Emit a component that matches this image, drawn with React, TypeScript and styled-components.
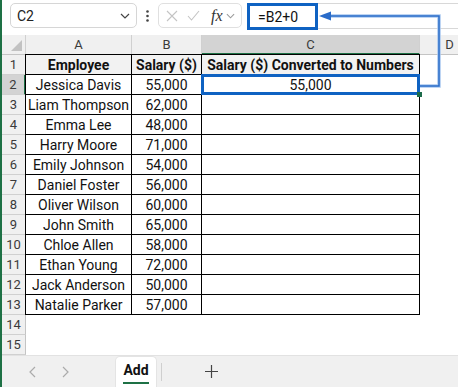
import React from 'react'
import styled, { createGlobalStyle, css } from 'styled-components'

const GlobalStyle = createGlobalStyle`
  html, body { margin: 0; padding: 0; background: #fff; }
  body { font-family: Roboto, 'Liberation Sans', Arial, sans-serif; }
`

const Window = styled.div`
  position: relative;
  width: 456px;
  height: 387px;
  overflow: hidden;
  border-left: 2px solid #1e7145;
  background: #fff;
`

const FormulaBar = styled.div`
  height: 35px;
  display: flex;
  align-items: flex-start;
  padding-top: 3px;
  box-sizing: border-box;
`

const NameBox = styled.div`
  margin-left: 8px;
  width: 127px;
  height: 25px;
  box-sizing: border-box;
  border: 1px solid #d6d6d6;
  border-radius: 5px;
  display: flex;
  align-items: center;
  justify-content: space-between;
  padding: 0 6px 0 6px;
  font-size: 14px;
  color: #222;
`

const Dots = styled.div`
  width: 21px;
  height: 25px;
  display: flex;
  align-items: center;
  justify-content: center;
  svg { display: block; }
`

const FxBox = styled.div`
  width: 84px;
  height: 25px;
  box-sizing: border-box;
  border: 1px solid #e0e0e0;
  border-radius: 5px;
  display: flex;
  align-items: center;
  padding: 0 4px 0 7px;
  gap: 9px;
  svg { display: block; }
`

const Fx = styled.span`
  font-family: 'Liberation Serif', 'DejaVu Serif', serif;
  font-style: italic;
  font-size: 16px;
  color: #333;
  margin-left: 2px;
  margin-right: -6px;
`

const FormulaInput = styled.div`
  flex: 1;
  margin-left: 5px;
  height: 26px;
  box-sizing: border-box;
  border-top: 1px solid #d8d8d8;
  border-bottom: 1px solid #d8d8d8;
  display: flex;
  align-items: flex-start;
`

const FormulaHighlight = styled.div`
  margin-top: -1px;
  width: 71px;
  height: 27px;
  box-sizing: border-box;
  border: 3px solid #0f62c2;
  display: flex;
  align-items: center;
  padding-left: 8px;
  font-size: 14px;
  color: #111;
`

const Sheet = styled.div`
  display: grid;
  grid-template-columns: 24px 106px 70px 218px 60px;
  grid-auto-rows: 20px;
`

const CornerCell = styled.div`
  position: relative;
  background: #f0f0f0;
  border-right: 1px solid #d0d0d0;
  border-bottom: 1px solid #c4c4c4;
  box-sizing: border-box;
  svg { position: absolute; right: 3px; bottom: 3px; }
`

const ColHeader = styled.div<{ $active?: boolean }>`
  background: ${p => (p.$active ? '#d3d3d3' : '#f0f0f0')};
  border-right: 1px solid #d0d0d0;
  border-bottom: ${p => (p.$active ? '2px solid #1e7145' : '1px solid #c4c4c4')};
  box-sizing: border-box;
  display: flex;
  align-items: center;
  justify-content: center;
  font-size: 13px;
  color: #3a3a3a;
`

const RowHeader = styled.div<{ $active?: boolean }>`
  background: ${p => (p.$active ? '#d3d3d3' : '#f0f0f0')};
  border-right: ${p => (p.$active ? '2px solid #1e7145' : '1px solid #c4c4c4')};
  border-bottom: 1px solid #d0d0d0;
  box-sizing: border-box;
  display: flex;
  align-items: center;
  justify-content: center;
  font-size: 13px;
  color: #3a3a3a;
`

const Cell = styled.div<{ $table?: boolean; $head?: boolean; $first?: boolean; $selected?: boolean }>`
  position: relative;
  box-sizing: border-box;
  display: flex;
  align-items: center;
  justify-content: center;
  font-size: 14px;
  color: #111;
  white-space: nowrap;
  ${p =>
    p.$table &&
    css`
      border-right: 1px solid #000;
      border-bottom: 1px solid #000;
    `}
  ${p =>
    p.$head &&
    css`
      background: #f2f2f2;
      font-weight: 700;
      border-top: 1px solid #000;
      margin-top: -1px;
      height: 21px;
    `}
  ${p =>
    p.$first &&
    css`
      border-left: 1px solid #000;
      margin-left: -1px;
    `}
  ${p =>
    p.$selected &&
    css`
      &::after {
        content: '';
        position: absolute;
        top: -1px;
        left: -1px;
        right: -1px;
        bottom: -1px;
        border: 3px solid #0f62c2;
      }
      &::before {
        content: '';
        position: absolute;
        right: -3px;
        bottom: -3px;
        width: 5px;
        height: 5px;
        background: #1b6b4a;
        z-index: 2;
      }
    `}
`

const Annotation = styled.svg`
  position: absolute;
  top: 0;
  left: -2px;
  pointer-events: none;
`

const TabBar = styled.div`
  height: 32px;
  box-sizing: border-box;
  background: #f0f0f0;
  border-top: 1px solid #e2e2e2;
  display: flex;
  align-items: flex-start;
`

const NavArrow = styled.div<{ $offset: number }>`
  margin-left: ${p => p.$offset}px;
  height: 31px;
  display: flex;
  align-items: center;
  svg { display: block; }
`

const Tab = styled.div`
  margin-left: 46px;
  width: 42px;
  height: 31px;
  box-sizing: border-box;
  background: #fff;
  border: 1px solid #e4e4e4;
  border-bottom: none;
  border-radius: 5px 5px 0 0;
  display: flex;
  flex-direction: column;
  align-items: center;
  padding-top: 5px;
  font-size: 14px;
  font-weight: 700;
  color: #111;
`

const TabUnderline = styled.div`
  margin-top: 4px;
  width: 26px;
  height: 2px;
  background: #1e7145;
`

const Separator = styled.div`
  margin: 7px 0 0 4px;
  width: 1px;
  height: 18px;
  background: #cfcfcf;
`

const AddSheet = styled.div`
  margin-left: 43px;
  height: 31px;
  display: flex;
  align-items: center;
  svg { display: block; }
`

const rows: [string, string][] = [
  ['Jessica Davis', '55,000'],
  ['Liam Thompson', '62,000'],
  ['Emma Lee', '48,000'],
  ['Harry Moore', '71,000'],
  ['Emily Johnson', '54,000'],
  ['Daniel Foster', '56,000'],
  ['Oliver Wilson', '60,000'],
  ['John Smith', '65,000'],
  ['Chloe Allen', '58,000'],
  ['Ethan Young', '72,000'],
  ['Jack Anderson', '50,000'],
  ['Natalie Parker', '57,000'],
]

const Chevron = ({ color = '#555', w = 10 }: { color?: string; w?: number }) => (
  <svg width={w} height={6} viewBox="0 0 10 6">
    <path d="M1 1 L5 5 L9 1" fill="none" stroke={color} strokeWidth="1.2" />
  </svg>
)

export default function App() {
  return (
    <>
      <GlobalStyle />
      <Window>
        <FormulaBar>
          <NameBox>
            <span>C2</span>
            <Chevron color="#444" w={10} />
          </NameBox>
          <Dots>
            <svg width="3" height="12" viewBox="0 0 3 12">
              <circle cx="1.5" cy="1.5" r="1.3" fill="#444" />
              <circle cx="1.5" cy="6" r="1.3" fill="#444" />
              <circle cx="1.5" cy="10.5" r="1.3" fill="#444" />
            </svg>
          </Dots>
          <FxBox>
            <svg width="12" height="12" viewBox="0 0 12 12">
              <path d="M1 1 L11 11 M11 1 L1 11" stroke="#c4c4c4" strokeWidth="1.1" />
            </svg>
            <svg width="13" height="11" viewBox="0 0 13 11">
              <path d="M1 6 L4.5 10 L12 1" fill="none" stroke="#c4c4c4" strokeWidth="1.1" />
            </svg>
            <Fx>fx</Fx>
            <Chevron color="#9a9a9a" w={9} />
          </FxBox>
          <FormulaInput>
            <FormulaHighlight>=B2+0</FormulaHighlight>
          </FormulaInput>
        </FormulaBar>

        <Sheet>
          <CornerCell>
            <svg width="11" height="11" viewBox="0 0 11 11">
              <polygon points="11,0 11,11 0,11" fill="#c2c2c2" />
            </svg>
          </CornerCell>
          <ColHeader>A</ColHeader>
          <ColHeader>B</ColHeader>
          <ColHeader $active>C</ColHeader>
          <ColHeader>D</ColHeader>

          <RowHeader>1</RowHeader>
          <Cell $table $head $first>Employee</Cell>
          <Cell $table $head>Salary ($)</Cell>
          <Cell $table $head>Salary ($) Converted to Numbers</Cell>
          <Cell />

          {rows.map(([name, salary], i) => (
            <React.Fragment key={name}>
              <RowHeader $active={i === 0}>{i + 2}</RowHeader>
              <Cell $table $first>{name}</Cell>
              <Cell $table>{salary}</Cell>
              <Cell $table $selected={i === 0}>{i === 0 ? '55,000' : ''}</Cell>
              <Cell />
            </React.Fragment>
          ))}

          {[14, 15].map(n => (
            <React.Fragment key={n}>
              <RowHeader>{n}</RowHeader>
              <Cell />
              <Cell />
              <Cell />
              <Cell />
            </React.Fragment>
          ))}
        </Sheet>

        <TabBar>
          <NavArrow $offset={27}>
            <svg width="7" height="12" viewBox="0 0 7 12">
              <path d="M6 1 L1 6 L6 11" fill="none" stroke="#ababab" strokeWidth="1.2" />
            </svg>
          </NavArrow>
          <NavArrow $offset={26}>
            <svg width="7" height="12" viewBox="0 0 7 12">
              <path d="M1 1 L6 6 L1 11" fill="none" stroke="#ababab" strokeWidth="1.2" />
            </svg>
          </NavArrow>
          <Tab>
            <span>Add</span>
            <TabUnderline />
          </Tab>
          <Separator />
          <AddSheet>
            <svg width="13" height="13" viewBox="0 0 13 13">
              <path d="M6.5 0 V13 M0 6.5 H13" stroke="#444" strokeWidth="1.2" />
            </svg>
          </AddSheet>
        </TabBar>

        <Annotation width="458" height="100" viewBox="0 0 458 100">
          <path d="M420 86 H439 V16 H330" fill="none" stroke="#a9c8ef" strokeWidth="3.5" />
          <path d="M420 86 H439 V16 H330" fill="none" stroke="#2a6cc9" strokeWidth="1.5" />
          <polygon points="319,16 331,11.5 331,20.5" fill="#2a6cc9" />
        </Annotation>
      </Window>
    </>
  )
}
